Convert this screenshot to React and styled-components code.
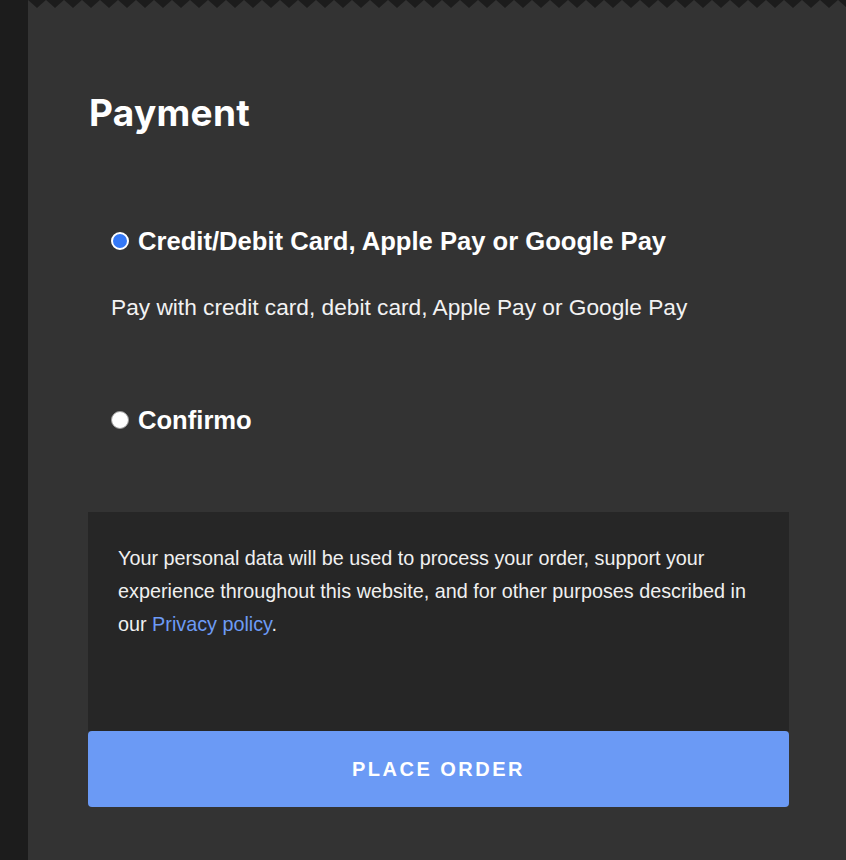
import React, { useState } from 'react';
import styled, { createGlobalStyle } from 'styled-components';

const GlobalStyle = createGlobalStyle`
  html, body {
    margin: 0;
    padding: 0;
    background: #1c1c1c;
  }
  body {
    font-family: "Liberation Sans", Arial, sans-serif;
  }
`;

const Page = styled.div`
  display: flex;
  min-height: 860px;
  background: #1c1c1c;
`;

const SideStrip = styled.div`
  width: 28px;
  flex-shrink: 0;
  background: #1c1c1c;
`;

const Panel = styled.main`
  flex: 1;
  display: flex;
  flex-direction: column;
  background: #333333;
  padding: 0 57px 53px 60px;
`;

const Teeth = styled.svg`
  display: block;
  width: calc(100% + 117px);
  height: 8px;
  margin: 0 -57px 0 -60px;
`;

const Heading = styled.h2`
  margin: 83px 0 0 1px;
  font-family: Inter, "Open Sans", sans-serif;
  font-size: 37px;
  line-height: 44px;
  font-weight: 700;
  color: #ffffff;
  letter-spacing: 0.3px;
`;

const MethodList = styled.ul`
  list-style: none;
  margin: 91px 0 0;
  padding: 0 0 0 23px;
  display: flex;
  flex-direction: column;
  gap: 84px;
`;

const Method = styled.li`
  display: flex;
  flex-direction: column;
  gap: 37px;
`;

const MethodLabel = styled.label`
  display: flex;
  align-items: center;
  gap: 9px;
  font-size: 25.6px;
  line-height: 30px;
  font-weight: 700;
  color: #ffffff;
  cursor: pointer;
`;

const Radio = styled.input`
  appearance: none;
  margin: 0;
  width: 18px;
  height: 18px;
  border-radius: 50%;
  flex-shrink: 0;
  background: ${(p) => (p.checked ? '#3478f6' : '#ffffff')};
  border: ${(p) => (p.checked ? '2px solid #ffffff' : '1px solid #9a9a9a')};
  box-shadow: ${(p) => (p.checked ? 'inset 0 0 0 2px #3478f6' : 'none')};
`;

const MethodDesc = styled.p`
  margin: 0;
  font-size: 22.7px;
  line-height: 28px;
  color: #f2f2f2;
`;

const Notice = styled.div`
  margin-top: 77px;
  background: #262626;
  padding: 30px 30px 90px;
  font-size: 19.8px;
  line-height: 33px;
  color: #f0f0f0;
`;

const Link = styled.a`
  color: #6d9bf5;
  text-decoration: none;
`;

const PlaceOrder = styled.button`
  height: 76px;
  border: none;
  border-radius: 4px;
  background: #6b9af5;
  color: #ffffff;
  font-family: "Liberation Sans", Arial, sans-serif;
  font-size: 20px;
  font-weight: 700;
  letter-spacing: 2.5px;
  cursor: pointer;
`;

const methods = [
  {
    id: 'card',
    label: 'Credit/Debit Card, Apple Pay or Google Pay',
    desc: 'Pay with credit card, debit card, Apple Pay or Google Pay',
  },
  { id: 'confirmo', label: 'Confirmo' },
];

export default function App() {
  const [selected, setSelected] = useState('card');

  return (
    <>
      <GlobalStyle />
      <Page>
        <SideStrip />
        <Panel>
          <Teeth preserveAspectRatio="none">
            <defs>
              <pattern id="teeth" width="18" height="8" patternUnits="userSpaceOnUse">
                <polygon points="0,0 18,0 9,8" fill="#1c1c1c" />
              </pattern>
            </defs>
            <rect width="100%" height="8" fill="url(#teeth)" />
          </Teeth>
          <Heading>Payment</Heading>
          <MethodList>
            {methods.map((m) => (
              <Method key={m.id}>
                <MethodLabel>
                  <Radio
                    type="radio"
                    name="payment"
                    checked={selected === m.id}
                    onChange={() => setSelected(m.id)}
                  />
                  {m.label}
                </MethodLabel>
                {selected === m.id && m.desc && <MethodDesc>{m.desc}</MethodDesc>}
              </Method>
            ))}
          </MethodList>
          <Notice>
            Your personal data will be used to process your order, support your
            experience throughout this website, and for other purposes described in
            our <Link href="#">Privacy policy</Link>.
          </Notice>
          <PlaceOrder type="button">PLACE ORDER</PlaceOrder>
        </Panel>
      </Page>
    </>
  );
}
